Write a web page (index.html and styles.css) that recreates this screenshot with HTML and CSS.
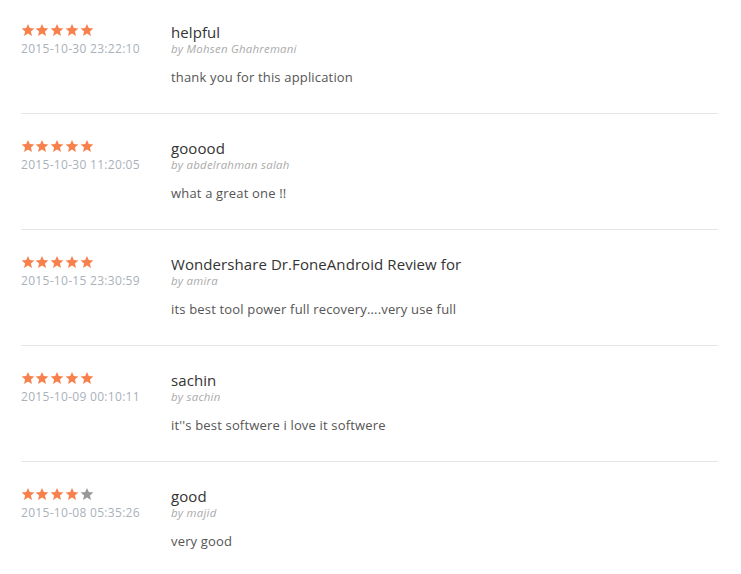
FILE: index.html
```html
<!DOCTYPE html>
<html>
<head>
<meta charset="utf-8">
<link rel="stylesheet" href="styles.css">
</head>
<body>
<svg width="0" height="0" class="defs">
  <defs>
    <symbol id="star" viewBox="0 0 24 24">
      <path d="M12 1.5l3.1 7.2 7.8.7-5.9 5.2 1.8 7.7L12 18.2l-6.8 4.1 1.8-7.7L1.1 9.4l7.8-.7z"/>
    </symbol>
  </defs>
</svg>
<div class="reviews">
  <div class="review">
    <div class="meta">
      <div class="stars"><svg class="s on"><use href="#star"/></svg><svg class="s on"><use href="#star"/></svg><svg class="s on"><use href="#star"/></svg><svg class="s on"><use href="#star"/></svg><svg class="s on"><use href="#star"/></svg></div>
      <div class="date">2015-10-30 23:22:10</div>
    </div>
    <div class="content">
      <div class="title">helpful</div>
      <div class="author">by Mohsen Ghahremani</div>
      <div class="text">thank you for this application</div>
    </div>
  </div>
  <div class="review">
    <div class="meta">
      <div class="stars"><svg class="s on"><use href="#star"/></svg><svg class="s on"><use href="#star"/></svg><svg class="s on"><use href="#star"/></svg><svg class="s on"><use href="#star"/></svg><svg class="s on"><use href="#star"/></svg></div>
      <div class="date">2015-10-30 11:20:05</div>
    </div>
    <div class="content">
      <div class="title">gooood</div>
      <div class="author">by abdelrahman salah</div>
      <div class="text">what a great one !!</div>
    </div>
  </div>
  <div class="review">
    <div class="meta">
      <div class="stars"><svg class="s on"><use href="#star"/></svg><svg class="s on"><use href="#star"/></svg><svg class="s on"><use href="#star"/></svg><svg class="s on"><use href="#star"/></svg><svg class="s on"><use href="#star"/></svg></div>
      <div class="date">2015-10-15 23:30:59</div>
    </div>
    <div class="content">
      <div class="title">Wondershare Dr.FoneAndroid Review for</div>
      <div class="author">by amira</div>
      <div class="text">its best tool power full recovery....very use full</div>
    </div>
  </div>
  <div class="review">
    <div class="meta">
      <div class="stars"><svg class="s on"><use href="#star"/></svg><svg class="s on"><use href="#star"/></svg><svg class="s on"><use href="#star"/></svg><svg class="s on"><use href="#star"/></svg><svg class="s on"><use href="#star"/></svg></div>
      <div class="date">2015-10-09 00:10:11</div>
    </div>
    <div class="content">
      <div class="title">sachin</div>
      <div class="author">by sachin</div>
      <div class="text">it''s best softwere i love it softwere</div>
    </div>
  </div>
  <div class="review last">
    <div class="meta">
      <div class="stars"><svg class="s on"><use href="#star"/></svg><svg class="s on"><use href="#star"/></svg><svg class="s on"><use href="#star"/></svg><svg class="s on"><use href="#star"/></svg><svg class="s off"><use href="#star"/></svg></div>
      <div class="date">2015-10-08 05:35:26</div>
    </div>
    <div class="content">
      <div class="title">good</div>
      <div class="author">by majid</div>
      <div class="text">very good</div>
    </div>
  </div>
</div>
</body>
</html>
```
FILE: styles.css
```css
html, body {
  margin: 0;
  padding: 0;
  background: #ffffff;
}
body {
  font-family: "Open Sans", "DejaVu Sans", sans-serif;
}
.defs {
  position: absolute;
  width: 0;
  height: 0;
}
.reviews {
  width: 697px;
  margin-left: 21px;
}
.review {
  display: flex;
  height: 115px;
  border-bottom: 1px solid #e6e6e6;
  box-sizing: content-box;
}
.review:first-child {
  height: 113px;
}
.review.last {
  border-bottom: none;
}
.meta {
  width: 150px;
  flex: none;
  padding-top: 25px;
}
.content {
  padding-top: 24px;
}
.review:first-child .meta {
  padding-top: 23px;
}
.review:first-child .content {
  padding-top: 22px;
}
.stars {
  display: flex;
  gap: 0.8px;
  height: 14px;
  margin-left: -0.5px;
}
.s {
  width: 14px;
  height: 14px;
}
.s.on { fill: #f7814c; }
.s.off { fill: #999999; }
.date {
  margin-top: 5px;
  font-size: 12px;
  line-height: 14px;
  letter-spacing: 0.3px;
  color: #aab1ba;
}
.title {
  font-size: 15px;
  line-height: 20px;
  letter-spacing: 0.08px;
  color: #333333;
}
.author {
  font-size: 11.4px;
  line-height: 13px;
  letter-spacing: 0.25px;
  font-style: italic;
  color: #aaaaaa;
}
.text {
  margin-top: 13px;
  font-size: 13px;
  line-height: 18px;
  letter-spacing: 0.17px;
  color: #555555;
}
```
